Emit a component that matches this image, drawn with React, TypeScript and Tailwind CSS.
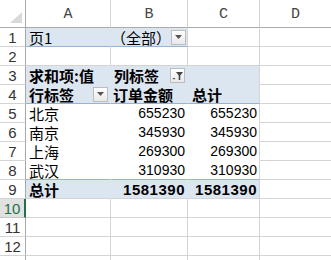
import React from 'react';

const CJK = "font-['Noto_Sans_CJK_SC',sans-serif]";
const NUM = "font-['Liberation_Sans','Noto_Sans_CJK_SC',sans-serif]";

type CellProps = {
  w: string;
  className?: string;
  children?: React.ReactNode;
};

const Cell: React.FC<CellProps> = ({ w, className = '', children }) => (
  <div className={`${w} h-full shrink-0 flex items-center border-r border-b box-border overflow-hidden ${className}`}>
    {children}
  </div>
);

const DropButton: React.FC<{ className?: string }> = ({ className = '' }) => (
  <div className={`w-[15px] h-[15px] shrink-0 border border-[#bdbdbd] bg-gradient-to-b from-white to-[#e8e8e8] flex items-center justify-center ${className}`}>
    <svg width="7" height="4" viewBox="0 0 7 4">
      <path d="M0 0 L7 0 L3.5 4 Z" fill="#555" />
    </svg>
  </div>
);

const FilterButton: React.FC<{ className?: string }> = ({ className = '' }) => (
  <div className={`w-[15px] h-[15px] shrink-0 border border-[#bdbdbd] bg-gradient-to-b from-white to-[#e8e8e8] flex items-center justify-center ${className}`}>
    <svg width="13" height="13" viewBox="0 0 13 13">
      <path d="M5 3 L12 3 L9.3 6.5 L9.3 11 L7.7 11 L7.7 6.5 Z" fill="#444" />
      <path d="M1.5 9 L4.5 9 L3 10.8 Z" fill="#555" />
    </svg>
  </div>
);

// column widths: row header, A, B, C, D
const W = ['w-[26px]', 'w-[85px]', 'w-[77px]', 'w-[72px]', 'w-[72px]'];

const GRID = 'border-[#d4d4d4]';
const PIVOT_LINE = 'border-b-[#95b3d7]';
const BLUE = 'bg-[#dce6f1]';

const RowHead: React.FC<{ n?: number; active?: boolean }> = ({ n, active }) => (
  <Cell
    w={W[0]}
    className={`justify-center ${NUM} text-[15px] ${
      active
        ? 'bg-[#e1e1e1] text-[#217346] border-r-2 border-r-[#217346] border-b-[#c6c6c6]'
        : 'bg-white text-[#333] border-r-[#a8a8a8] border-b-[#d4d4d4]'
    }`}
  >
    {n}
  </Cell>
);

const Row: React.FC<{ children: React.ReactNode }> = ({ children }) => (
  <div className="flex h-[19px] leading-[19px]">{children}</div>
);

const cities: [string, number][] = [
  ['北京', 655230],
  ['南京', 345930],
  ['上海', 269300],
  ['武汉', 310930],
];

export default function App() {
  return (
    <div className="w-[331px] h-[260px] overflow-hidden bg-white text-black select-none">
      {/* column headers */}
      <div className="flex h-[28px]">
        <Cell w={W[0]} className="items-end justify-end pb-[4px] pr-[3px] border-r-[#a8a8a8] border-b-[#ababab]">
          <svg width="12" height="11" viewBox="0 0 12 11">
            <path d="M12 0 L12 11 L0 11 Z" fill="#dadada" />
          </svg>
        </Cell>
        {['A', 'B', 'C', 'D'].map((c, i) => (
          <Cell
            key={c}
            w={W[i + 1]}
            className={`items-end justify-center pb-[1px] text-[15px] text-[#444] font-['Liberation_Mono',monospace] border-r-[#d4d4d4] border-b-[#ababab]`}
          >
            {c}
          </Cell>
        ))}
      </div>

      {/* row 1: page field */}
      <Row>
        <RowHead n={1} />
        <Cell w={W[1]} className={`${BLUE} border-r-transparent ${PIVOT_LINE} pl-[3px] ${CJK} text-[15px]`}>
          页1
        </Cell>
        <Cell w={W[2]} className={`${BLUE} border-r-[#d4d4d4] ${PIVOT_LINE} justify-between pl-[0px] ${CJK} text-[15px]`}>
          <span className="whitespace-nowrap">（全部）</span>
          <DropButton className="mr-[1px]" />
        </Cell>
        <Cell w={W[3]} className={GRID} />
        <Cell w={W[4]} className={GRID} />
      </Row>

      {/* row 2 */}
      <Row>
        <RowHead n={2} />
        <Cell w={W[1]} className={GRID} />
        <Cell w={W[2]} className={GRID} />
        <Cell w={W[3]} className={GRID} />
        <Cell w={W[4]} className={GRID} />
      </Row>

      {/* row 3 */}
      <Row>
        <RowHead n={3} />
        <Cell w={W[1]} className={`${BLUE} border-transparent pl-[3px] ${CJK} text-[15px] font-bold overflow-visible whitespace-nowrap`}>
          求和项:值
        </Cell>
        <Cell w={W[2]} className={`${BLUE} border-transparent justify-between pl-[3px] ${CJK} text-[15px] font-bold`}>
          <span>列标签</span>
          <FilterButton className="mr-[2px]" />
        </Cell>
        <Cell w={W[3]} className={`${BLUE} border-r-[#d4d4d4] border-b-transparent`} />
        <Cell w={W[4]} className={GRID} />
      </Row>

      {/* row 4 */}
      <Row>
        <RowHead n={4} />
        <Cell w={W[1]} className={`${BLUE} border-r-transparent ${PIVOT_LINE} justify-between pl-[3px] ${CJK} text-[15px] font-bold`}>
          <span>行标签</span>
          <DropButton className="mr-[2px]" />
        </Cell>
        <Cell w={W[2]} className={`${BLUE} border-r-transparent ${PIVOT_LINE} pl-[2px] ${CJK} text-[15px] font-bold whitespace-nowrap`}>
          订单金额
        </Cell>
        <Cell w={W[3]} className={`${BLUE} border-r-[#d4d4d4] ${PIVOT_LINE} pl-[4px] ${CJK} text-[15px] font-bold`}>
          总计
        </Cell>
        <Cell w={W[4]} className={GRID} />
      </Row>

      {/* rows 5-8: data */}
      {cities.map(([city, v], i) => {
        const last = i === cities.length - 1;
        const bottom = last ? PIVOT_LINE : 'border-b-transparent';
        return (
          <Row key={city}>
            <RowHead n={5 + i} />
            <Cell w={W[1]} className={`bg-white border-r-transparent ${bottom} pl-[3px] ${CJK} text-[15px]`}>
              {city}
            </Cell>
            <Cell w={W[2]} className={`bg-white border-r-transparent ${bottom} justify-end pr-[2px] ${NUM} text-[14px]`}>
              {v}
            </Cell>
            <Cell w={W[3]} className={`bg-white border-r-[#d4d4d4] ${bottom} justify-end pr-[2px] ${NUM} text-[14px]`}>
              {v}
            </Cell>
            <Cell w={W[4]} className={GRID} />
          </Row>
        );
      })}

      {/* row 9: totals */}
      <Row>
        <RowHead n={9} />
        <Cell w={W[1]} className={`${BLUE} border-r-transparent border-b-[#d4d4d4] pl-[3px] ${CJK} text-[15px] font-bold`}>
          总计
        </Cell>
        <Cell w={W[2]} className={`${BLUE} border-r-transparent border-b-[#d4d4d4] justify-end pr-[2px] ${NUM} text-[15px] font-bold tracking-[0.5px]`}>
          1581390
        </Cell>
        <Cell w={W[3]} className={`${BLUE} border-r-[#d4d4d4] border-b-[#d4d4d4] justify-end pr-[2px] ${NUM} text-[15px] font-bold tracking-[0.5px]`}>
          1581390
        </Cell>
        <Cell w={W[4]} className={GRID} />
      </Row>

      {/* rows 10-12, plus the top edge of row 13 */}
      {[10, 11, 12, 13].map((n) => (
        <Row key={n}>
          <RowHead n={n === 13 ? undefined : n} active={n === 10} />
          <Cell w={W[1]} className={GRID} />
          <Cell w={W[2]} className={GRID} />
          <Cell w={W[3]} className={GRID} />
          <Cell w={W[4]} className={GRID} />
        </Row>
      ))}
    </div>
  );
}
